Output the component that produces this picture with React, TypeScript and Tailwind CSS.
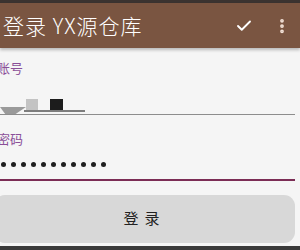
import { Check, EllipsisVertical } from 'lucide-react'

const cjk = { fontFamily: '"Noto Sans CJK SC", "Noto Sans", sans-serif' }

export default function App() {
  return (
    <div className="flex h-[250px] w-[300px] flex-col overflow-hidden bg-[#f5f5f5]" style={cjk}>
      <div className="h-[3px] bg-[#3b3330]" />
      <header className="flex h-[45px] items-center bg-[#7a5541] pl-[3px] pr-[9px] text-white shadow-[0_2px_3px_rgba(0,0,0,0.25)]">
        <h1 className="flex-1 text-[21px] font-light leading-none tracking-[1px]">登录 YX源仓库</h1>
        <Check className="mr-[20px] h-[18px] w-[18px]" strokeWidth={2.5} />
        <EllipsisVertical className="h-[18px] w-[18px] text-[#f3e3d8]" strokeWidth={3} />
      </header>

      <div className="flex flex-col pr-[5px]">
        <label className="-ml-[3px] mt-[11px] text-[13px] leading-[18px] text-[#8b4f98]">账号</label>
        <div className="relative mt-[17px] h-[21px] border-b-[1.5px] border-[#8d8d8d]">
          <div className="flex h-full items-end">
            <div className="h-[7px] w-[26px] bg-[#9a9a9a] [clip-path:polygon(0_0,100%_0,60%_100%,20%_100%)]" />
            <div className="mb-[2px] h-[13px] w-[12px] bg-[#c3c3c3]" />
            <div className="mb-[2px] ml-[12px] h-[13px] w-[13px] bg-[#1c1c1c]" />
          </div>
          <div className="absolute bottom-[2px] left-[24px] h-[2px] w-[61px] bg-[#7d7d7d]" />
        </div>

        <label className="-ml-[3px] mt-[15px] text-[13px] leading-[18px] text-[#8b4f98]">密码</label>
        <div className="flex h-[33px] items-center gap-[5.5px] border-b-2 border-[#7b2d55] pb-[1px] pl-[1px] pt-[3px]">
          {Array.from({ length: 11 }).map((_, i) => (
            <span key={i} className="h-[4.5px] w-[4.5px] rounded-full bg-[#1f1f1f]" />
          ))}
        </div>
      </div>

      <div className="pr-[5px] pt-[14px]">
        <button className="-ml-[6px] flex h-[48px] w-[301px] items-center justify-center rounded-[11px] bg-[#d8d8d8] pb-[2px] text-[15px] tracking-[6px] text-[#222]">
          登录
        </button>
      </div>
      <div className="mt-auto h-[4px] bg-[#3a3a3a]" />
    </div>
  )
}
